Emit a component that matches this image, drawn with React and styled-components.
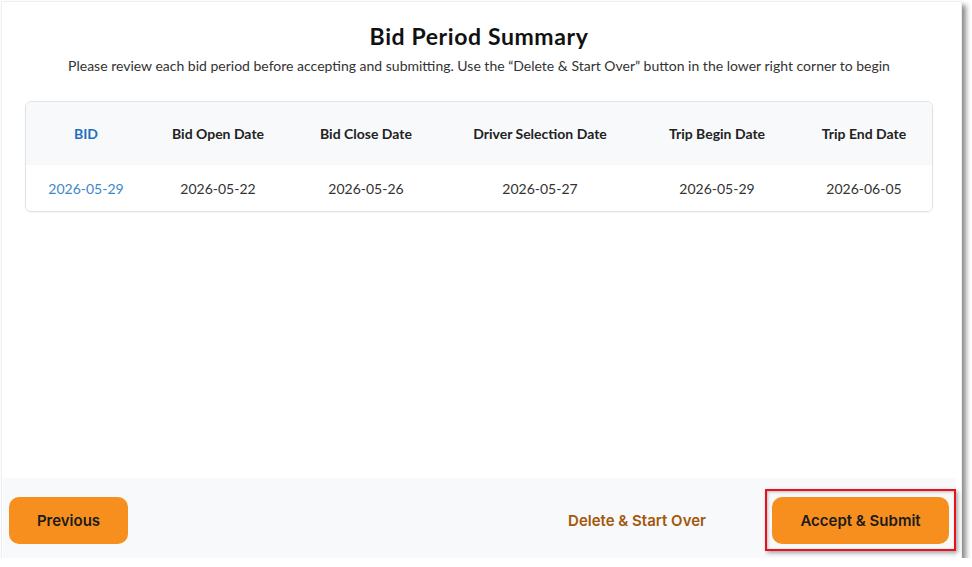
import React from "react";
import styled, { createGlobalStyle } from "styled-components";

const GlobalStyle = createGlobalStyle`
  html, body { margin: 0; padding: 0; background: #ffffff; }
  body { font-family: Lato, "Noto Sans", sans-serif; color: #222; }
  * { box-sizing: border-box; }
`;

const Window = styled.div`
  width: 961px;
  height: 557px;
  margin: 1px 0 0 1px;
  border: 1px solid #efefef;
  border-bottom: none;
  background: #fff;
  box-shadow: 4px 4px 5px rgba(0, 0, 0, 0.45);
  display: flex;
  flex-direction: column;
`;

const Content = styled.main`
  flex: 1;
  padding: 19px 28px 0 23px;
  display: flex;
  flex-direction: column;
  align-items: center;
`;

const Title = styled.h1`
  margin: 0;
  font-size: 23px;
  line-height: 30px;
  font-weight: 700;
  letter-spacing: 0.6px;
  color: #111;
`;

const Subtitle = styled.p`
  margin: 5px 0 0;
  font-size: 14px;
  line-height: 20px;
  color: #333;
`;

const TableCard = styled.div`
  margin-top: 25px;
  width: 908px;
  border: 1px solid #dfe3e8;
  border-radius: 6px;
  overflow: hidden;
  box-shadow: 0 1px 2px rgba(0, 0, 0, 0.04);
`;

const Row = styled.div`
  display: grid;
  grid-template-columns: 120px 144px 152px 196px 158px 136px;
  align-items: center;
  height: ${(p) => (p.$head ? "63px" : "46px")};
  background: ${(p) => (p.$head ? "#f8f9fb" : "#fff")};
`;

const Cell = styled.div`
  text-align: center;
  font-size: 14px;
  font-weight: ${(p) => (p.$head ? 700 : 400)};
  color: ${(p) => (p.$link ? (p.$head ? "#1f6fc1" : "#3d88c9") : p.$head ? "#222" : "#333")};
  white-space: nowrap;
`;

const Footer = styled.footer`
  height: 80px;
  margin: 0 5px 0 1px;
  background: #f8f9fb;
  display: flex;
  align-items: flex-start;
  padding: 19px 0 0 6px;
`;

const PrimaryButton = styled.button`
  width: ${(p) => p.$w}px;
  height: 47px;
  border: none;
  border-radius: 10px;
  background: #f78f1f;
  color: #1b1b1b;
  font-family: Inter, "Noto Sans", sans-serif;
  font-weight: 600;
  font-size: 15px;
  cursor: pointer;
`;

const TextButton = styled.button`
  margin-left: auto;
  margin-right: 59px;
  height: 47px;
  border: none;
  background: transparent;
  padding: 0;
  color: #a3570b;
  font-family: Inter, "Noto Sans", sans-serif;
  font-weight: 600;
  font-size: 15px;
  cursor: pointer;
`;

const Highlight = styled.div`
  margin-top: -8px;
  border: 2px solid #e8101a;
  padding: 6px 5px 5px 5px;
  box-shadow: 2px 2px 4px rgba(0, 0, 0, 0.35), inset 1px 1px 3px rgba(0, 0, 0, 0.25);
  display: flex;
`;

const headers = [
  "BID",
  "Bid Open Date",
  "Bid Close Date",
  "Driver Selection Date",
  "Trip Begin Date",
  "Trip End Date",
];
const values = ["2026-05-29", "2026-05-22", "2026-05-26", "2026-05-27", "2026-05-29", "2026-06-05"];

export default function App() {
  return (
    <>
      <GlobalStyle />
      <Window>
        <Content>
          <Title>Bid Period Summary</Title>
          <Subtitle>
            Please review each bid period before accepting and submitting. Use the “Delete &amp; Start Over” button in the lower right corner to begin
          </Subtitle>
          <TableCard>
            <Row $head>
              {headers.map((h, i) => (
                <Cell key={h} $head $link={i === 0}>
                  {h}
                </Cell>
              ))}
            </Row>
            <Row>
              {values.map((v, i) => (
                <Cell key={i} $link={i === 0}>
                  {v}
                </Cell>
              ))}
            </Row>
          </TableCard>
        </Content>
        <Footer>
          <PrimaryButton $w={119}>Previous</PrimaryButton>
          <TextButton>Delete &amp; Start Over</TextButton>
          <Highlight>
            <PrimaryButton $w={177}>Accept &amp; Submit</PrimaryButton>
          </Highlight>
        </Footer>
      </Window>
    </>
  );
}
